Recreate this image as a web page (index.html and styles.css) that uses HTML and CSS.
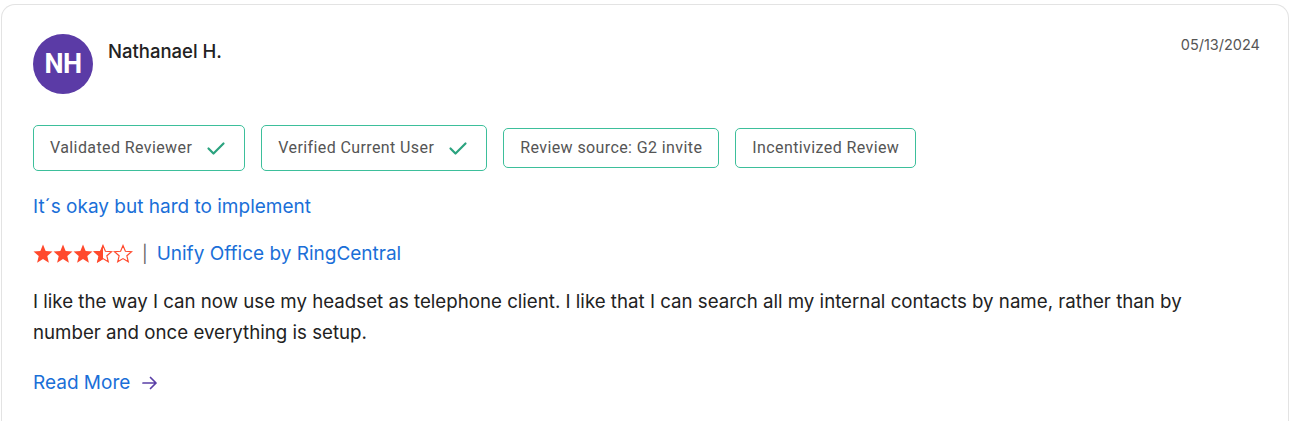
FILE: index.html
```html
<!DOCTYPE html>
<html lang="en">
<head>
<meta charset="utf-8">
<title>Review</title>
<link rel="stylesheet" href="styles.css">
</head>
<body>
<article class="card">
  <header class="head">
    <div class="who">
      <div class="avatar">NH</div>
      <div class="name">Nathanael H.</div>
    </div>
    <div class="date">05/13/2024</div>
  </header>
  <ul class="badges">
    <li class="badge">Validated Reviewer <svg class="check" viewBox="0 0 24 24" width="24" height="24"><path d="M4.5 12.5l5 5L19.5 7.5" fill="none" stroke="#2ba37f" stroke-width="2.2" stroke-linecap="round" stroke-linejoin="round"/></svg></li>
    <li class="badge">Verified Current User <svg class="check" viewBox="0 0 24 24" width="24" height="24"><path d="M4.5 12.5l5 5L19.5 7.5" fill="none" stroke="#2ba37f" stroke-width="2.2" stroke-linecap="round" stroke-linejoin="round"/></svg></li>
    <li class="badge">Review source: G2 invite</li>
    <li class="badge">Incentivized Review</li>
  </ul>
  <h2 class="title">It´s okay but hard to implement</h2>
  <div class="rating">
    <svg class="stars" viewBox="0 0 100 20" width="100" height="20">
      <defs>
        <path id="st" d="M10 0.6L12.65 6.96L19.51 7.51L14.28 11.99L15.88 18.69L10 15.1L4.12 18.69L5.72 11.99L0.49 7.51L7.35 6.96Z"/>
        <clipPath id="half"><rect x="0" y="0" width="10" height="20"/></clipPath>
      </defs>
      <use href="#st" fill="#ff492c"/>
      <use href="#st" x="20" fill="#ff492c"/>
      <use href="#st" x="40" fill="#ff492c"/>
      <g transform="translate(60 0)">
        <use href="#st" fill="none" stroke="#ff492c" stroke-width="1.3" transform="translate(10 10.3) scale(0.9) translate(-10 -10.3)"/>
        <use href="#st" fill="#ff492c" clip-path="url(#half)"/>
      </g>
      <g transform="translate(80 0)">
        <use href="#st" fill="none" stroke="#ff492c" stroke-width="1.3" transform="translate(10 10.3) scale(0.9) translate(-10 -10.3)"/>
      </g>
    </svg>
    <span class="sep">|</span>
    <a class="product" href="#">Unify Office by RingCentral</a>
  </div>
  <p class="body">I like the way I can now use my headset as telephone client. I like that I can search all my internal contacts by name, rather than by number and once everything is setup.</p>
  <a class="more" href="#">Read More <svg viewBox="0 0 18 18" width="18" height="18"><path d="M2 9h13M9.5 3.5L15 9l-5.5 5.5" fill="none" stroke="#5a3fa6" stroke-width="1.7" stroke-linecap="round" stroke-linejoin="round"/></svg></a>
</article>
</body>
</html>
```

FILE: styles.css
```css
* { box-sizing: border-box; }
html, body { margin: 0; padding: 0; background: #fff; }
body {
  font-family: Inter, "Noto Sans", sans-serif;
  color: #222;
  padding: 4px 1px 0 1px;
}
.card {
  border: 1px solid #e3e3e3;
  border-bottom: none;
  border-radius: 14px 14px 0 0;
  padding: 29px 28px 30px 31px;
  height: 440px;
}
.head {
  display: flex;
  justify-content: space-between;
  align-items: flex-start;
}
.who { display: flex; align-items: flex-start; gap: 15px; }
.avatar {
  width: 60px; height: 60px; border-radius: 50%;
  background: #5b3ba6;
  color: #fff;
  font-family: Roboto, sans-serif;
  font-weight: 700;
  font-size: 27px;
  display: flex; align-items: center; justify-content: center;
  letter-spacing: -0.5px;
}
.name {
  font-size: 18.5px;
  font-weight: 500;
  color: #222;
  margin-top: 6px;
}
.date {
  font-size: 14.5px;
  color: #555;
  margin-top: 2px;
}
.badges {
  list-style: none;
  margin: 31px 0 0 0;
  padding: 0;
  display: flex;
  align-items: center;
  gap: 16px;
}
.badge {
  display: flex;
  align-items: center;
  gap: 12px;
  border: 1px solid #3dbf9b;
  border-radius: 5px;
  padding: 10px 16px;
  line-height: 18px;
  font-family: Roboto, sans-serif;
  font-size: 16px;
  letter-spacing: 0.4px;
  color: #555;
}
.check { display: block; }
.title {
  margin: 24px 0 0 0;
  font-size: 19px;
  font-weight: 400;
  color: #1a6fd8;
  line-height: 24px;
}
.rating {
  margin-top: 23px;
  display: flex;
  align-items: center;
  gap: 9px;
  font-size: 19px;
  line-height: 24px;
}
.stars { display: block; }
.sep { color: #666; font-size: 17px; }
.product { color: #1a6fd8; text-decoration: none; }
.body {
  margin: 20px 0 0 0;
  max-width: 1200px;
  font-size: 18.7px;
  line-height: 31px;
  color: #222;
}
.more {
  display: inline-flex;
  align-items: center;
  gap: 11px;
  margin-top: 23px;
  font-size: 19px;
  line-height: 24px;
  color: #1a6fd8;
  text-decoration: none;
}
.more svg { display: block; }
```
